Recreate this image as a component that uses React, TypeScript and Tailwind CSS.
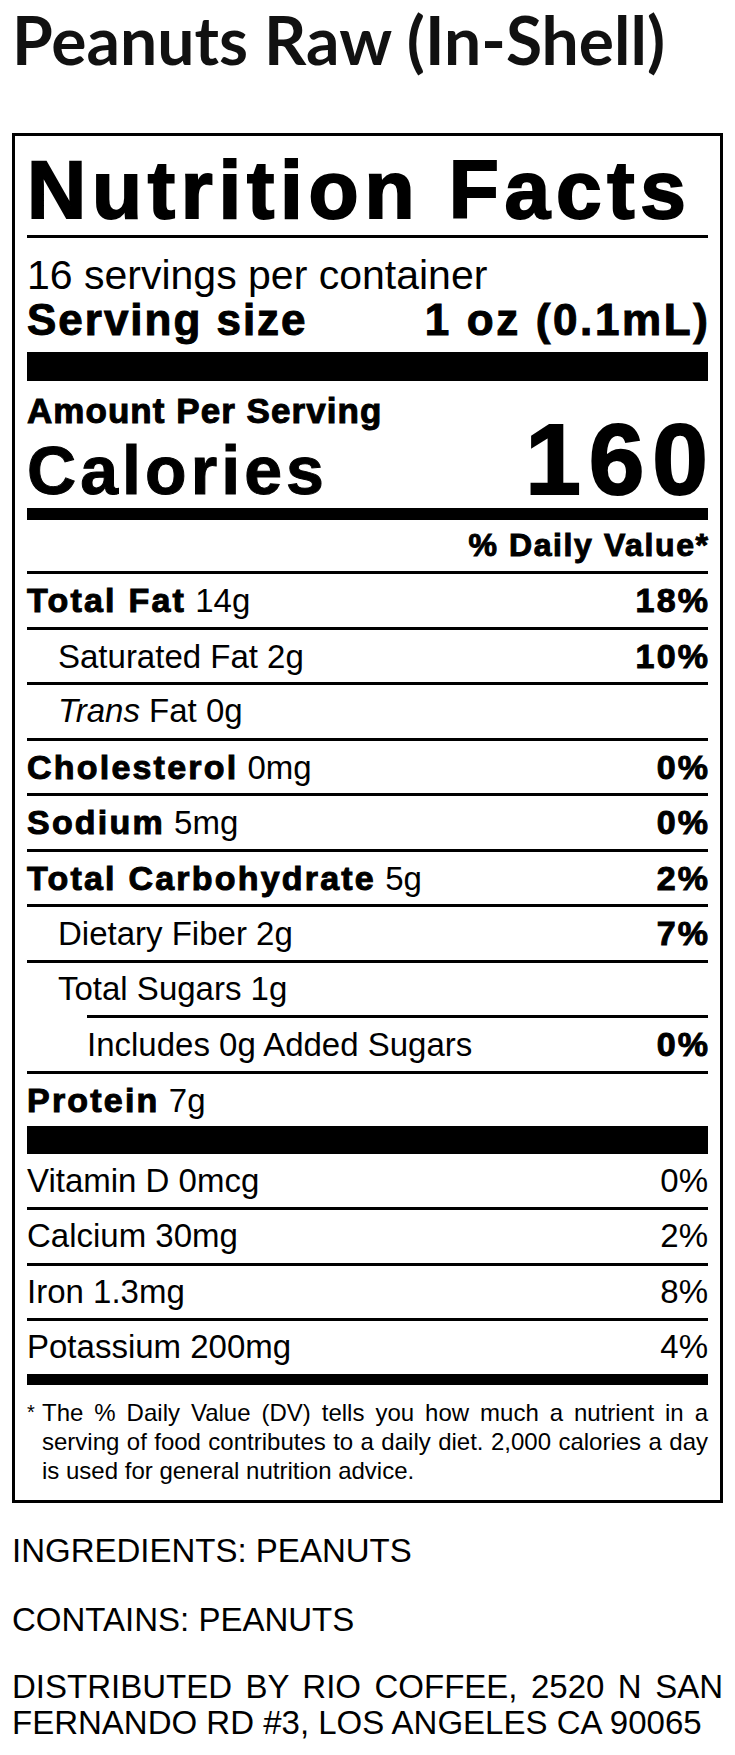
import clsx from 'clsx';

type Nutrient = {
  name: string;
  amount: string;
  dv?: string;
  level?: 0 | 1 | 2;
  italic?: string;
};

const NUTRIENTS: Nutrient[] = [
  { name: 'Total Fat', amount: '14g', dv: '18%' },
  { name: 'Saturated Fat', amount: '2g', dv: '10%', level: 1 },
  { name: 'Fat', italic: 'Trans', amount: '0g', level: 1 },
  { name: 'Cholesterol', amount: '0mg', dv: '0%' },
  { name: 'Sodium', amount: '5mg', dv: '0%' },
  { name: 'Total Carbohydrate', amount: '5g', dv: '2%' },
  { name: 'Dietary Fiber', amount: '2g', dv: '7%', level: 1 },
  { name: 'Total Sugars', amount: '1g', level: 1 },
  { name: 'Includes 0g Added Sugars', amount: '', dv: '0%', level: 2 },
  { name: 'Protein', amount: '7g' },
];

const VITAMINS = [
  { name: 'Vitamin D 0mcg', dv: '0%' },
  { name: 'Calcium 30mg', dv: '2%' },
  { name: 'Iron 1.3mg', dv: '8%' },
  { name: 'Potassium 200mg', dv: '4%' },
];

// heavy = Helvetica Black stand-in
const heavy = 'font-bold [-webkit-text-stroke:1px_#000]';

function NutrientRow({ n }: { n: Nutrient }) {
  const level = n.level ?? 0;
  return (
    <div
      className={clsx(
        'flex h-[55.5px] items-baseline justify-between border-t-[3px] border-black text-[33px] leading-[52.5px]',
        level === 1 && 'pl-[31px]',
        level === 2 && 'ml-[60px]'
      )}
    >
      <span>
        {level === 0 ? (
          <span className={clsx(heavy, 'text-[34px] tracking-[0.065em]')}>{n.name}</span>
        ) : n.italic ? (
          <>
            <i>{n.italic}</i> {n.name}
          </>
        ) : (
          n.name
        )}
        {n.amount && ' ' + n.amount}
      </span>
      {n.dv && (
        <span className={clsx(heavy, 'text-[34px] tracking-[0.065em] -mr-[0.065em]')}>{n.dv}</span>
      )}
    </div>
  );
}

export default function App() {
  return (
    <div className="min-h-screen bg-white px-3 text-black font-['Liberation_Sans',Arial,Helvetica,sans-serif]">
      <h1 className="pt-[2px] font-['Lato',sans-serif] text-[66px] font-bold leading-[76px] text-[#111]">
        Peanuts Raw (In-Shell)
      </h1>

      <div className="mt-[55px] border-[3px] border-black px-3 pt-[14px] pb-[15px]">
        <h2 className={clsx(heavy, 'text-[82px] leading-[80px] tracking-[0.07em] [-webkit-text-stroke:2px_#000]')}>
          Nutrition Facts
        </h2>
        <div className="mt-[5px] h-[3px] bg-black" />

        <p className="mt-[14px] text-[41px] leading-[46px]">16 servings per container</p>
        <div className="flex items-baseline justify-between text-[44px] leading-[44px]">
          <span className={clsx(heavy, 'tracking-[0.045em] [-webkit-text-stroke:1.2px_#000]')}>Serving size</span>
          <span className={clsx(heavy, 'tracking-[0.06em] -mr-[0.06em] [-webkit-text-stroke:1.2px_#000]')}>
            1 oz (0.1mL)
          </span>
        </div>
        <div className="mt-[10px] h-[29px] bg-black" />

        <p className={clsx(heavy, 'mt-[13px] text-[35px] leading-[34px] tracking-[0.03em]')}>Amount Per Serving</p>
        <div className="flex h-[64px] items-baseline justify-between">
          <span className={clsx(heavy, 'text-[68px] leading-[40px] tracking-[0.06em] [-webkit-text-stroke:1.6px_#000]')}>
            Calories
          </span>
          <span className={clsx(heavy, 'text-[100px] leading-[62px] tracking-[0.08em] -mr-[0.08em] [-webkit-text-stroke:2px_#000]')}>
            160
          </span>
        </div>
        <div className="mt-[16px] h-[12px] bg-black" />

        <p className={clsx(heavy, 'mt-[7px] text-right text-[32px] leading-[36px] tracking-[0.05em] -mr-[0.05em]')}>
          % Daily Value*
        </p>

        <div className="mt-[8px]">
          {NUTRIENTS.map((n) => (
            <NutrientRow key={n.name} n={n} />
          ))}
        </div>
        <div className="h-[28px] bg-black" />

        <div>
          {VITAMINS.map((v, i) => (
            <div
              key={v.name}
              className={clsx(
                'flex items-baseline justify-between text-[33px]',
                i === 0 ? 'h-[53px] leading-[53px]' : 'h-[55.5px] border-t-[3px] border-black leading-[52.5px]'
              )}
            >
              <span>{v.name}</span>
              <span>{v.dv}</span>
            </div>
          ))}
        </div>
        <div className="h-[11px] bg-black" />

        <div className="mt-[13px] flex text-[24px] leading-[29px]">
          <span className="w-[15px] shrink-0 text-[20px]">*</span>
          <div className="flex-1">
            <p className="text-justify [text-align-last:justify]">
              The % Daily Value (DV) tells you how much a nutrient in a
            </p>
            <p className="text-justify [text-align-last:justify]">
              serving of food contributes to a daily diet. 2,000 calories a day
            </p>
            <p>is used for general nutrition advice.</p>
          </div>
        </div>
      </div>

      <div className="text-[33px]">
        <p className="mt-[28px] leading-[40px]">INGREDIENTS: PEANUTS</p>
        <p className="mt-[29px] leading-[40px]">CONTAINS: PEANUTS</p>
        <p className="mt-[29px] text-justify leading-[36px]">
          DISTRIBUTED BY RIO COFFEE, 2520 N SAN FERNANDO RD #3, LOS ANGELES CA 90065
        </p>
      </div>
    </div>
  );
}
